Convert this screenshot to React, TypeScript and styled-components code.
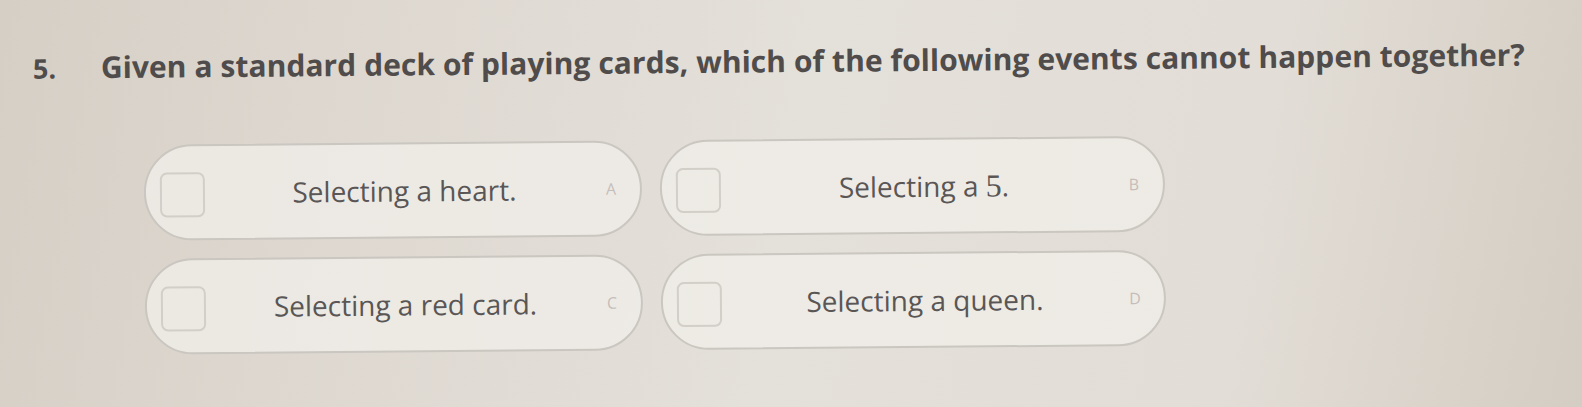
import React from "react";
import styled, { createGlobalStyle } from "styled-components";

const Global = createGlobalStyle`
  html, body { margin: 0; padding: 0; }
  body {
    width: 1582px;
    height: 407px;
    overflow: hidden;
    background: linear-gradient(100deg, #d6cfc6 0%, #ddd7cf 20%, #e4e0da 50%, #e2ddd6 78%, #d4cdc3 100%);
    font-family: "Open Sans", "Liberation Sans", sans-serif;
  }
`;

const Page = styled.div`
  display: flex;
  flex-direction: column;
  padding: 48px 0 0 34px;
  transform: rotate(-0.5deg);
  transform-origin: 0 200px;
`;

const Title = styled.div`
  display: flex;
  align-items: baseline;
  color: #4f4c4b;
  font-weight: 700;
  line-height: 40px;
`;

const Num = styled.span`
  width: 68px;
  font-size: 27px;
`;

const Question = styled.span`
  font-size: 30px;
  letter-spacing: 0.05px;
`;

const Grid = styled.div`
  display: grid;
  grid-template-columns: 498px 505px;
  column-gap: 18px;
  row-gap: 18px;
  margin: 57px 0 0 110px;
`;

const Card = styled.div`
  display: flex;
  align-items: center;
  height: 96px;
  box-sizing: border-box;
  border: 2px solid #cac6c0;
  border-radius: 50px;
  background: rgba(240, 238, 233, 0.8);
  padding: 0 22px 0 14px;
`;

const Check = styled.div`
  width: 45px;
  height: 45px;
  box-sizing: border-box;
  border: 2px solid #d2cec8;
  border-radius: 7px;
  flex: none;
  margin-top: 4px;
`;

const Label = styled.div`
  flex: 1;
  text-align: center;
  color: #595655;
  font-size: 28px;
`;

const Digit = styled.span`
  font-family: "Liberation Serif", serif;
  font-size: 32px;
`;

const Letter = styled.span`
  color: #c6bdb9;
  font-size: 16px;
  width: 14px;
  text-align: center;
`;

const options: { text: React.ReactNode; letter: string }[] = [
  { text: "Selecting a heart.", letter: "A" },
  { text: <>Selecting a <Digit>5</Digit>.</>, letter: "B" },
  { text: "Selecting a red card.", letter: "C" },
  { text: "Selecting a queen.", letter: "D" },
];

export default function App() {
  return (
    <>
      <Global />
      <Page>
        <Title>
          <Num>5.</Num>
          <Question>
            Given a standard deck of playing cards, which of the following events cannot happen together?
          </Question>
        </Title>
        <Grid>
          {options.map((o) => (
            <Card key={o.letter}>
              <Check />
              <Label>{o.text}</Label>
              <Letter>{o.letter}</Letter>
            </Card>
          ))}
        </Grid>
      </Page>
    </>
  );
}
